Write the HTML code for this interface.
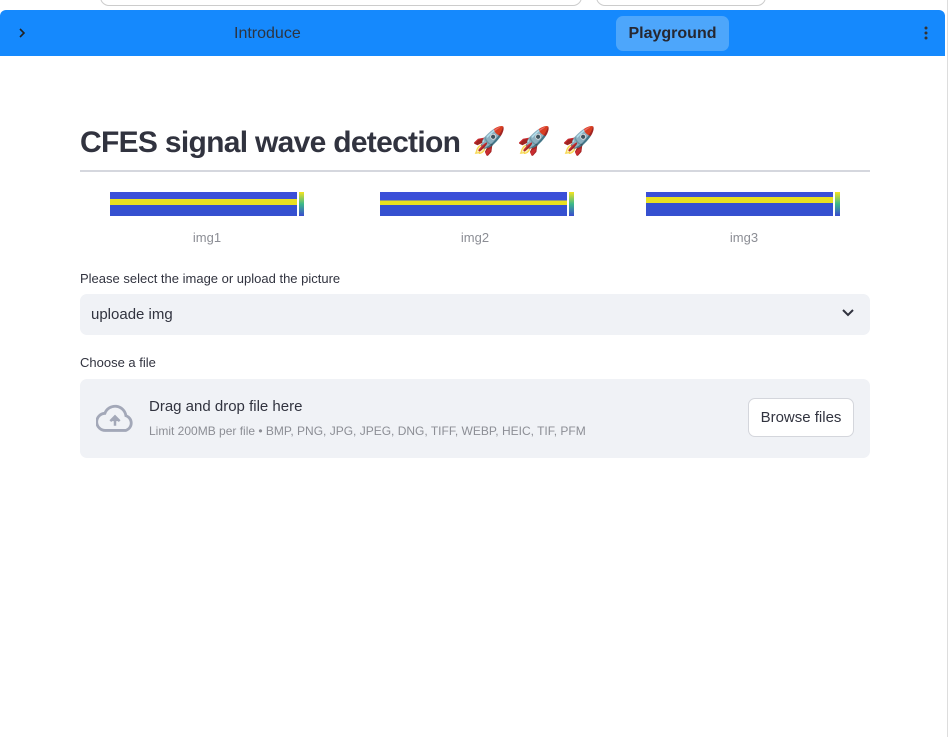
<!DOCTYPE html>
<html><head><meta charset="utf-8"><style>
*{margin:0;padding:0;box-sizing:border-box}
body{width:951px;height:737px;background:#fff;font-family:"Source Sans Pro","Liberation Sans",sans-serif;color:#31333f;position:relative;overflow:hidden}
.top{position:absolute;left:0;top:0;width:951px;height:10px;background:#fff}
.pill1{position:absolute;left:100px;top:-12px;width:482px;height:18px;border:1px solid #ccc;border-radius:10px}
.pill2{position:absolute;left:596px;top:-12px;width:170px;height:18px;border:1px solid #ccc;border-radius:10px}
.hdr{position:absolute;left:0;top:10px;width:945px;height:46px;background:#1589fd;border-radius:6px 6px 0 0}
.rline{position:absolute;left:947px;top:0;width:1px;height:737px;background:#ddd}
.intro{position:absolute;left:234px;top:25px;font-size:16px;color:#2c3440}
.play{position:absolute;left:616px;top:16px;width:113px;height:35px;background:#4da6fb;border-radius:7px;font-weight:bold;font-size:16px;color:#262730;text-align:center;line-height:36px}
h1{position:absolute;left:80px;top:126px;font-size:30px;font-weight:bold;color:#31333f;letter-spacing:-0.7px;white-space:nowrap}
.rk{position:absolute;top:125px;font-size:27px;font-family:'Noto Color Emoji','DejaVu Sans',sans-serif}
.hr{position:absolute;left:80px;top:170px;width:790px;height:2px;background:#d5d7de}
.img{position:absolute;top:188px;width:208px;height:34px}
.plot{position:absolute;left:10px;top:4px;width:187px;height:24px;background:linear-gradient(180deg,#3b4fd8 0 30%,#e8e020 30% 55%,#3550d0 55% 100%)}
.cb{position:absolute;left:199px;top:4px;width:5px;height:24px;background:linear-gradient(#f5e31f,#3bb98a,#3a4ad0)}
.cap{position:absolute;top:230px;font-size:13px;color:#8c8e95;width:100px;text-align:center}
.lbl{position:absolute;left:80px;font-size:13px;color:#31333f}
.sel{position:absolute;left:80px;top:294px;width:790px;height:41px;background:#f0f2f6;border-radius:7px;font-size:15px;padding:12px 11px}
.up{position:absolute;left:80px;top:379px;width:790px;height:79px;background:#f0f2f6;border-radius:7px}
.btn{position:absolute;left:668px;top:19px;width:106px;height:39px;border:1px solid #d4d6dc;border-radius:7px;background:#fff;font-size:15px;text-align:center;line-height:37px}
</style></head><body>
<div class="top"><div class="pill1"></div><div class="pill2"></div></div>
<div class="rline"></div>
<div class="hdr"></div>
<svg style="position:absolute;left:18px;top:27px" width="8" height="12"><path d="M2 2l4 4-4 4" stroke="#222" stroke-width="1.6" fill="none"/></svg>
<div class="intro">Introduce</div>
<div class="play">Playground</div>
<svg style="position:absolute;left:923px;top:26px" width="6" height="16"><circle cx="3" cy="2" r="1.5" fill="#333"/><circle cx="3" cy="7" r="1.5" fill="#333"/><circle cx="3" cy="12" r="1.5" fill="#333"/></svg>
<h1>CFES signal wave detection</h1>
<span class="rk" style="left:472px">🚀</span>
<span class="rk" style="left:517px">🚀</span>
<span class="rk" style="left:562px">🚀</span>
<div class="hr"></div>
<div class="img" style="left:100px"><div class="plot"></div><div class="cb"></div></div>
<div class="img" style="left:370px"><div class="plot" style="background:linear-gradient(180deg,#3b4fd8 0 35%,#e8e020 35% 55%,#3550d0 55% 100%)"></div><div class="cb"></div></div>
<div class="img" style="left:636px"><div class="plot" style="background:linear-gradient(180deg,#3b4fd8 0 20%,#e8e020 20% 45%,#3550d0 45% 100%)"></div><div class="cb"></div></div>
<div class="cap" style="left:157px">img1</div>
<div class="cap" style="left:425px">img2</div>
<div class="cap" style="left:694px">img3</div>
<div class="lbl" style="top:271px">Please select the image or upload the picture</div>
<div class="sel">uploade img
<svg style="position:absolute;right:16px;top:15px" width="12" height="8"><path d="M1 1l5 5 5-5" stroke="#31333f" stroke-width="2" fill="none"/></svg></div>
<div class="lbl" style="top:355px">Choose a file</div>
<div class="up">
<svg style="position:absolute;left:16px;top:25px" width="38" height="28" viewBox="0 0 24 18"><path d="M19 7.5A7 7 0 0 0 5.5 6 5.5 5.5 0 0 0 6 17h13a5 5 0 0 0 0-9.5z" fill="none" stroke="#a3a8b8" stroke-width="1.8"/><path d="M12 14V9M9 11l3-3 3 3" fill="#a3a8b8" stroke="#a3a8b8" stroke-width="1.6"/></svg>
<div style="position:absolute;left:69px;top:19px;font-size:15px">Drag and drop file here</div>
<div style="position:absolute;left:69px;top:45px;font-size:12px;color:#8c8e95">Limit 200MB per file • BMP, PNG, JPG, JPEG, DNG, TIFF, WEBP, HEIC, TIF, PFM</div>
<div class="btn">Browse files</div>
</div>
</body></html>
